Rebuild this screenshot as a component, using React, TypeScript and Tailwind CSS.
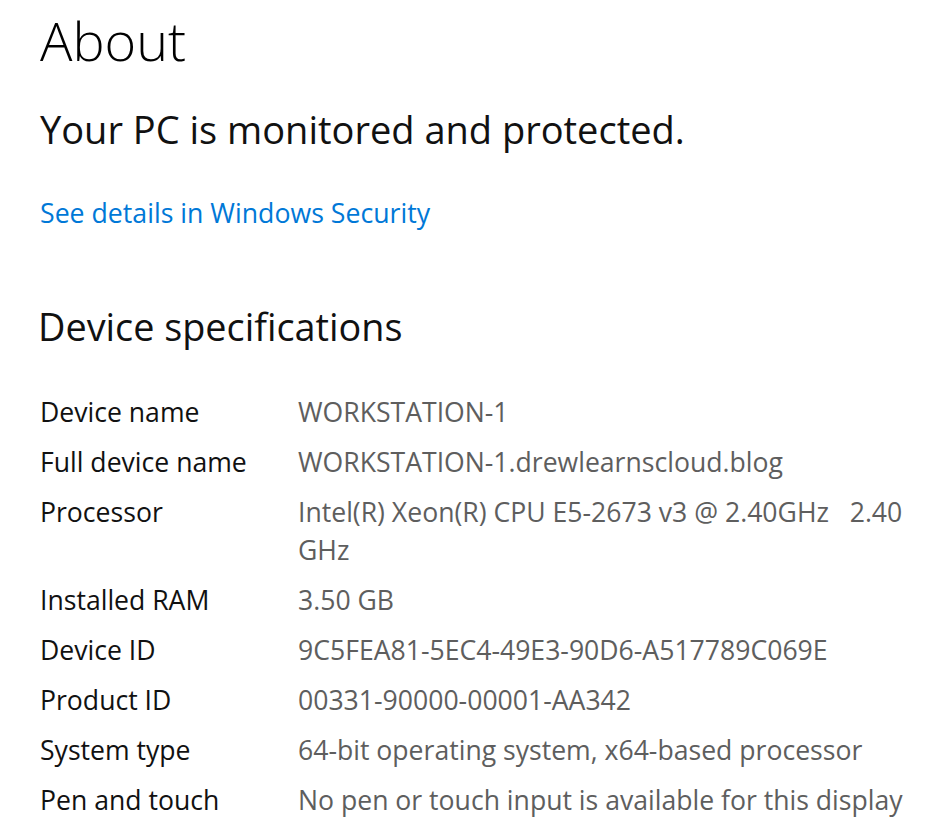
const specs: { label: string; value: React.ReactNode }[] = [
  { label: "Device name", value: "WORKSTATION-1" },
  { label: "Full device name", value: "WORKSTATION-1.drewlearnscloud.blog" },
  {
    label: "Processor",
    value: (
      <>
        Intel(R) Xeon(R) CPU E5-2673 v3 @ 2.40GHz&nbsp;&nbsp;&nbsp;2.40
        <br />
        GHz
      </>
    ),
  },
  { label: "Installed RAM", value: "3.50 GB" },
  { label: "Device ID", value: "9C5FEA81-5EC4-49E3-90D6-A517789C069E" },
  { label: "Product ID", value: "00331-90000-00001-AA342" },
  { label: "System type", value: "64-bit operating system, x64-based processor" },
  { label: "Pen and touch", value: "No pen or touch input is available for this display" },
];

export default function App() {
  return (
    <div className="min-h-screen w-[950px] bg-white font-['Open_Sans',sans-serif] text-black">
      <div className="px-10 pt-1">
        <h1 className="text-[54px] font-light leading-[72px]">About</h1>

        <p className="mt-[27px] text-[38px] leading-[52px] text-[#111]">
          Your PC is monitored and protected.
        </p>

        <a href="#" className="mt-[40px] block text-[26.7px] leading-[36px] text-[#0078d7]">
          See details in Windows Security
        </a>

        <h2 className="-ml-0.5 mt-[70px] text-[37.8px] leading-[52px] text-[#111]">
          Device specifications
        </h2>

        <dl className="mt-[40px] flex flex-col gap-3 text-[26.6px] leading-[38px]">
          {specs.map((s) => (
            <div key={s.label} className="flex">
              <dt className="w-[258px] shrink-0 text-[#111]">{s.label}</dt>
              <dd className="text-[#5e5e5e]">{s.value}</dd>
            </div>
          ))}
        </dl>
      </div>
    </div>
  );
}
